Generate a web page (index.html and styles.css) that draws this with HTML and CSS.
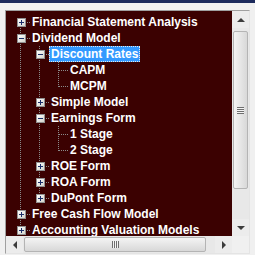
FILE: index.html
```html
<!DOCTYPE html>
<html>
<head>
<meta charset="utf-8">
<link rel="stylesheet" href="styles.css">
</head>
<body>
<div class="topbar"></div>
<div class="frame">
  <div class="tree">
    <div class="view">
      <div class="list">
        <div class="row"><span class="cell first"><i class="exp plus"></i></span><span class="label">Financial Statement Analysis</span></div>
        <div class="row"><span class="cell mid"><i class="exp minus"></i></span><span class="label">Dividend Model</span></div>
        <div class="row"><span class="cell v"></span><span class="cell mid"><i class="exp minus"></i></span><span class="label sel">Discount Rates</span></div>
        <div class="row"><span class="cell v"></span><span class="cell v"></span><span class="cell mid leaf"></span><span class="label">CAPM</span></div>
        <div class="row"><span class="cell v"></span><span class="cell v"></span><span class="cell last leaf"></span><span class="label">MCPM</span></div>
        <div class="row"><span class="cell v"></span><span class="cell mid"><i class="exp plus"></i></span><span class="label">Simple Model</span></div>
        <div class="row"><span class="cell v"></span><span class="cell mid"><i class="exp minus"></i></span><span class="label">Earnings Form</span></div>
        <div class="row"><span class="cell v"></span><span class="cell v"></span><span class="cell mid leaf"></span><span class="label">1 Stage</span></div>
        <div class="row"><span class="cell v"></span><span class="cell v"></span><span class="cell last leaf"></span><span class="label">2 Stage</span></div>
        <div class="row"><span class="cell v"></span><span class="cell mid"><i class="exp plus"></i></span><span class="label">ROE Form</span></div>
        <div class="row"><span class="cell v"></span><span class="cell mid"><i class="exp plus"></i></span><span class="label">ROA Form</span></div>
        <div class="row"><span class="cell v"></span><span class="cell last"><i class="exp plus"></i></span><span class="label">DuPont Form</span></div>
        <div class="row"><span class="cell mid"><i class="exp plus"></i></span><span class="label">Free Cash Flow Model</span></div>
        <div class="row"><span class="cell last"><i class="exp plus"></i></span><span class="label">Accounting Valuation Models</span></div>
      </div>
      <div class="vscroll">
        <div class="btn"><span class="arr-up"></span></div>
        <div class="track">
          <div class="thumb-v"><span class="grip-v"></span></div>
        </div>
        <div class="btn"><span class="arr-down"></span></div>
      </div>
    </div>
    <div class="hbar">
      <div class="hscroll">
        <div class="btn"><span class="arr-left"></span></div>
        <div class="htrack">
          <div class="thumb-h"><span class="grip-h"></span></div>
        </div>
        <div class="btn"><span class="arr-right"></span></div>
      </div>
      <div class="corner"></div>
    </div>
  </div>
</div>
</body>
</html>
```
FILE: styles.css
```css
html, body {
  margin: 0;
  padding: 0;
  background: #f0f0f0;
  font-family: "Liberation Sans", Arial, sans-serif;
}
body {
  height: 100vh;
  overflow: hidden;
  display: flex;
  flex-direction: column;
}
.topbar {
  height: 3px;
  flex: none;
  background: #1c2a5c;
}
.frame {
  flex: 1;
  min-height: 0;
  display: flex;
  padding: 7px 5px 1px 5px;
}
.tree {
  flex: 1;
  min-width: 0;
  border: 1px solid #a0a0a0;
  border-right-color: #e4e4e4;
  border-bottom-color: #e4e4e4;
  background: #3b0101;
  display: grid;
  grid-template-rows: minmax(0, 1fr) 17px;
}
.view {
  display: flex;
  overflow: hidden;
  min-height: 0;
}
.list {
  flex: 1;
  padding: 3px 0 0 5px;
  overflow: hidden;
}
.row {
  display: flex;
  height: 16px;
  white-space: nowrap;
}
.cell {
  width: 19px;
  flex: none;
  display: flex;
  align-items: center;
  justify-content: center;
  background-repeat: no-repeat;
}
.cell.v {
  background-image: repeating-linear-gradient(#8a8a8a 0 1px, transparent 1px 2px);
  background-size: 1px 16px;
  background-position: 9px 0;
}
.cell.mid, .cell.first, .cell.last {
  background-image:
    repeating-linear-gradient(#8a8a8a 0 1px, transparent 1px 2px),
    repeating-linear-gradient(90deg, #8a8a8a 0 1px, transparent 1px 2px);
  background-size: 1px 16px, 9px 1px;
  background-position: 9px 0, 10px 8px;
}
.cell.first {
  background-size: 1px 8px, 9px 1px;
  background-position: 9px 8px, 10px 8px;
}
.cell.last {
  background-size: 1px 9px, 9px 1px;
  background-position: 9px 0, 10px 8px;
}
.exp {
  width: 7px;
  height: 7px;
  border: 1px solid #919191;
  background: linear-gradient(135deg, #ffffff, #d4d4cc);
  position: relative;
  margin-left: 1px;
}
.exp::before {
  content: "";
  position: absolute;
  left: 1px;
  top: 3px;
  width: 5px;
  height: 1px;
  background: #1a2e6a;
}
.exp.plus::after {
  content: "";
  position: absolute;
  left: 3px;
  top: 1px;
  width: 1px;
  height: 5px;
  background: #1a2e6a;
}
.label {
  color: #ffffff;
  font-weight: bold;
  font-size: 12px;
  line-height: 16px;
  padding: 0 2px;
}
.label.sel {
  background: #3399ff;
  outline: 1px dotted #e8e8e8;
  outline-offset: -1px;
}
.vscroll {
  width: 17px;
  flex: none;
  display: flex;
  flex-direction: column;
  background: #e8e8e8;
}
.btn {
  width: 17px;
  height: 17px;
  flex: none;
  display: flex;
  align-items: center;
  justify-content: center;
  background: #ececec;
}
.track {
  flex: 1;
  min-height: 0;
  padding: 3px 0 30px 0;
  display: flex;
  flex-direction: column;
}
.thumb-v {
  flex: 1;
  margin: 0 1px;
  border: 1px solid #b4b4b4;
  border-radius: 2px;
  background: linear-gradient(90deg, #f4f4f4, #d8d8d8);
  display: flex;
  align-items: center;
  justify-content: center;
}
.grip-v {
  width: 7px;
  height: 7px;
  background: repeating-linear-gradient(#6e6e6e 0 1px, #f4f4f4 1px 2px);
}
.arr-up, .arr-down, .arr-left, .arr-right {
  width: 0;
  height: 0;
}
.arr-up {
  border-left: 4px solid transparent;
  border-right: 4px solid transparent;
  border-bottom: 4px solid #3c3c3c;
}
.arr-down {
  border-left: 4px solid transparent;
  border-right: 4px solid transparent;
  border-top: 4px solid #3c3c3c;
}
.arr-left {
  border-top: 4px solid transparent;
  border-bottom: 4px solid transparent;
  border-right: 4px solid #3c3c3c;
}
.arr-right {
  border-top: 4px solid transparent;
  border-bottom: 4px solid transparent;
  border-left: 4px solid #3c3c3c;
}
.hbar {
  display: flex;
}
.hscroll {
  flex: 1;
  display: flex;
  background: #e8e8e8;
}
.htrack {
  flex: 1;
  display: flex;
  padding: 0 9px 0 1px;
}
.thumb-h {
  flex: 1;
  margin: 1px 0;
  border: 1px solid #b4b4b4;
  border-radius: 2px;
  background: linear-gradient(#f4f4f4, #d8d8d8);
  display: flex;
  align-items: center;
  justify-content: center;
}
.grip-h {
  width: 7px;
  height: 7px;
  background: repeating-linear-gradient(90deg, #6e6e6e 0 1px, #f4f4f4 1px 2px);
}
.corner {
  width: 17px;
  background: #f0f0f0;
}
```
